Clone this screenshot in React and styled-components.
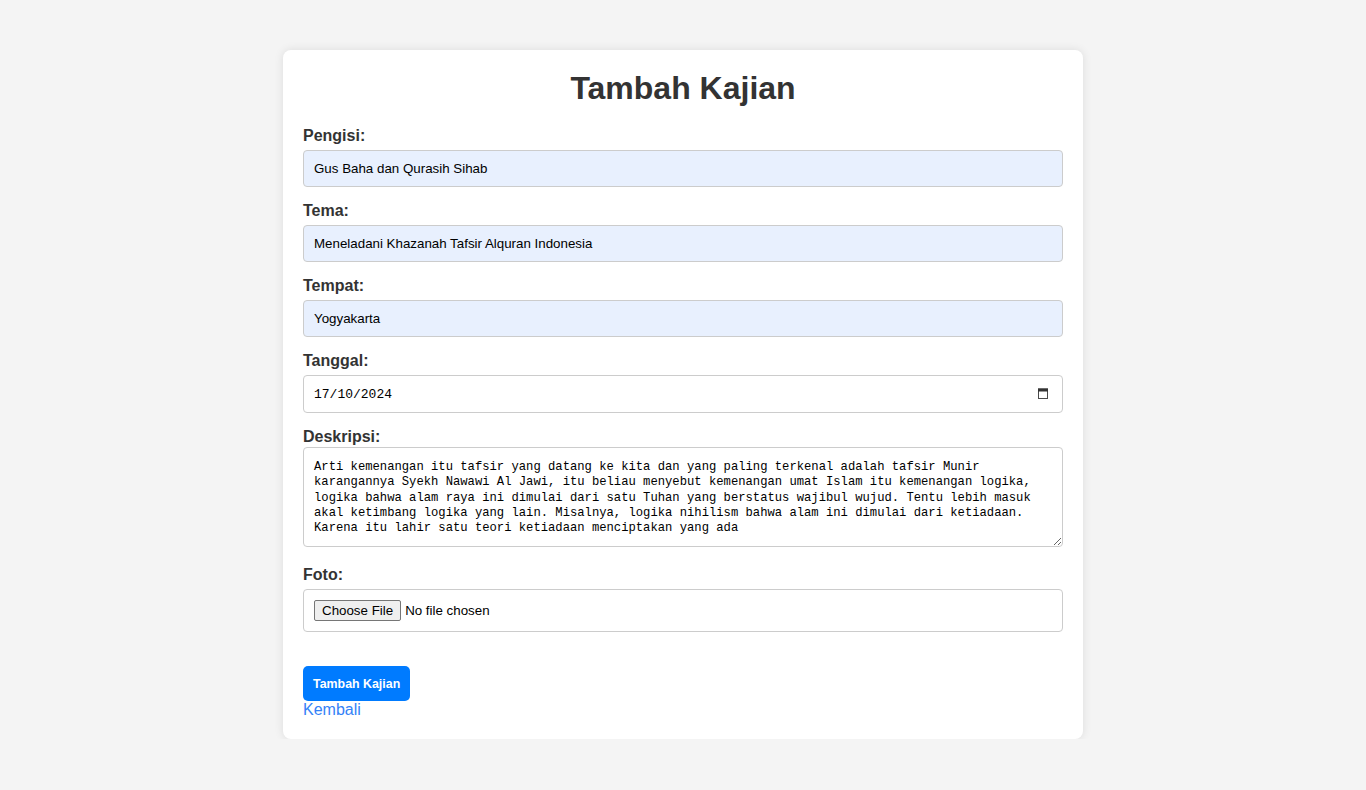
import React from "react";
import styled, { createGlobalStyle } from "styled-components";

const GlobalStyle = createGlobalStyle`
  html, body {
    margin: 0;
    padding: 0;
    background: #f4f4f4;
    font-family: "Liberation Sans", Arial, sans-serif;
    color: #333;
  }
  * { box-sizing: border-box; }
`;

const Card = styled.div`
  width: 800px;
  margin: 50px auto 0;
  padding: 20px;
  background: #fff;
  border-radius: 8px;
  box-shadow: 0 0 10px rgba(0, 0, 0, 0.1);
`;

const Title = styled.h1`
  margin: 0 0 20px;
  font-size: 32px;
  line-height: 36px;
  font-weight: bold;
  text-align: center;
  color: #333;
`;

const Form = styled.form`
  display: flex;
  flex-direction: column;
`;

const Group = styled.div`
  display: flex;
  flex-direction: column;
  gap: ${(p) => p.$gap ?? 5}px;
  margin-bottom: ${(p) => p.$space ?? 14}px;
`;

const Label = styled.label`
  display: block;
  padding-top: 1px;
  font-size: 16px;
  line-height: 18px;
  font-weight: bold;
  color: #333;
`;

const TextInput = styled.input`
  display: block;
  width: 100%;
  height: ${(p) => p.$h ?? 37}px;
  padding: 10px;
  border: 1px solid #ccc;
  border-radius: 4px;
  background: ${(p) => (p.$filled ? "#e8f0fe" : "#fff")};
  color: #000;
  font-family: ${(p) =>
    p.$mono ? '"Liberation Mono", monospace' : '"Liberation Sans", Arial, sans-serif'};
  font-size: ${(p) => (p.$mono ? "13px" : "13.33px")};
  outline: none;
`;

const DateWrap = styled.div`
  position: relative;
`;

const CalendarIcon = styled.svg`
  position: absolute;
  right: 15px;
  top: 13px;
  width: 10px;
  height: 11px;
  pointer-events: none;
`;

const TextArea = styled.textarea`
  display: block;
  width: 100%;
  height: 100px;
  padding: 12px 10px 8px;
  border: 1px solid #ccc;
  border-radius: 4px;
  background: #fff;
  color: #000;
  font-family: "Liberation Mono", monospace;
  font-size: 12.2px;
  line-height: 15.3px;
  outline: none;
`;

const FileInput = styled.input`
  display: block;
  width: 100%;
  height: 43px;
  padding: 10px;
  border: 1px solid #ccc;
  border-radius: 4px;
  background: #fff;
  color: #000;
  font-family: "Liberation Sans", Arial, sans-serif;
  font-size: 13.33px;

  &::file-selector-button {
    height: 21px;
    margin-right: 4px;
    padding: 1px 7px;
    border: 1px solid #767676;
    border-radius: 2px;
    background: #efefef;
    color: #000;
    font-family: "Liberation Sans", Arial, sans-serif;
    font-size: 13.33px;
  }
`;

const Actions = styled.div`
  display: flex;
  flex-direction: column;
  align-items: flex-start;
`;

const SubmitButton = styled.button`
  height: 35px;
  padding: 0 10px;
  border: none;
  border-radius: 5px;
  background: #007bff;
  color: #fff;
  font-family: "Liberation Sans", Arial, sans-serif;
  font-size: 12.4px;
  font-weight: bold;
  cursor: pointer;
`;

const BackLink = styled.a`
  font-size: 16px;
  line-height: 18px;
  color: #3482f7;
  text-decoration: none;
`;

const description =
  "Arti kemenangan itu tafsir yang datang ke kita dan yang paling terkenal adalah tafsir Munir karangannya Syekh Nawawi Al Jawi, itu beliau menyebut kemenangan umat Islam itu kemenangan logika, logika bahwa alam raya ini dimulai dari satu Tuhan yang berstatus wajibul wujud. Tentu lebih masuk akal ketimbang logika yang lain. Misalnya, logika nihilism bahwa alam ini dimulai dari ketiadaan. Karena itu lahir satu teori ketiadaan menciptakan yang ada";

export default function App() {
  return (
    <>
      <GlobalStyle />
      <Card>
        <Title>Tambah Kajian</Title>
        <Form onSubmit={(e) => e.preventDefault()}>
          <Group>
            <Label htmlFor="pengisi">Pengisi:</Label>
            <TextInput id="pengisi" $filled defaultValue="Gus Baha dan Qurasih Sihab" />
          </Group>
          <Group>
            <Label htmlFor="tema">Tema:</Label>
            <TextInput
              id="tema"
              $filled
              defaultValue="Meneladani Khazanah Tafsir Alquran Indonesia"
            />
          </Group>
          <Group>
            <Label htmlFor="tempat">Tempat:</Label>
            <TextInput id="tempat" $filled defaultValue="Yogyakarta" />
          </Group>
          <Group>
            <Label htmlFor="tanggal">Tanggal:</Label>
            <DateWrap>
              <TextInput id="tanggal" $mono $h={38} defaultValue="17/10/2024" />
              <CalendarIcon viewBox="0 0 10 11">
                <rect x="0.5" y="1" width="9" height="9.5" fill="none" stroke="#4a4a4a" strokeWidth="1" />
                <rect x="0" y="0.5" width="10" height="3" fill="#333" />
              </CalendarIcon>
            </DateWrap>
          </Group>
          <Group $gap={1} $space={18}>
            <Label htmlFor="deskripsi">Deskripsi:</Label>
            <TextArea id="deskripsi" spellCheck={false} defaultValue={description} />
          </Group>
          <Group $space={34}>
            <Label htmlFor="foto">Foto:</Label>
            <FileInput id="foto" type="file" />
          </Group>
          <Actions>
            <SubmitButton type="submit">Tambah Kajian</SubmitButton>
            <BackLink href="#">Kembali</BackLink>
          </Actions>
        </Form>
      </Card>
    </>
  );
}
